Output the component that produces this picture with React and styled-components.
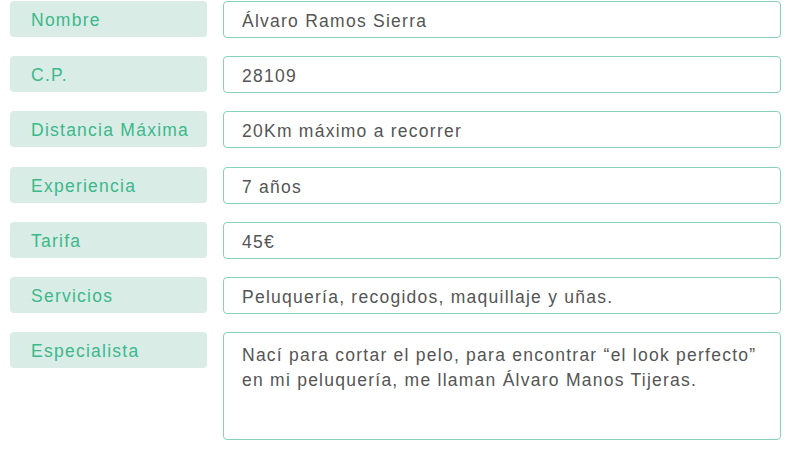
import React from "react";
import styled, { createGlobalStyle } from "styled-components";

const Global = createGlobalStyle`
  html, body { margin: 0; padding: 0; background: #ffffff; }
  body { font-family: "Liberation Sans", Arial, sans-serif; }
  * { box-sizing: border-box; }
`;

const Form = styled.form`
  display: grid;
  grid-template-columns: 197px 558px;
  align-items: start;
  column-gap: 16px;
  row-gap: 18.2px;
  padding: 1px 0 0 10px;
  width: 799px;
`;

const Label = styled.label`
  height: 36px;
  display: flex;
  align-items: ${(p) => (p.$top ? "flex-start" : "center")};
  padding: ${(p) => (p.$top ? "9px 0 0 21px" : "3px 0 0 21px")};
  background: #d9ece6;
  border-radius: 4px;
  color: #3cb88b;
  font-size: 17.5px;
  letter-spacing: 1.25px;
`;

const fieldText = `
  font-family: "Liberation Sans", Arial, sans-serif;
  font-size: 17.5px;
  letter-spacing: 1.25px;
  color: #555555;
  background: #ffffff;
  border: 1px solid #86d4b8;
  border-radius: 4px;
  outline: none;
  width: 100%;
  margin: 0;
`;

const Input = styled.input`
  ${fieldText}
  height: 37px;
  padding: 4px 0 0 18px;
`;

const Area = styled.textarea`
  ${fieldText}
  height: 108px;
  padding: 10px 4px 0 18px;
  line-height: 24.5px;
  resize: none;
  overflow: hidden;
`;

const rows = [
  ["Nombre", "Álvaro Ramos Sierra"],
  ["C.P.", "28109"],
  ["Distancia Máxima", "20Km máximo a recorrer"],
  ["Experiencia", "7 años"],
  ["Tarifa", "45€"],
  ["Servicios", "Peluquería, recogidos, maquillaje y uñas."],
];

export default function App() {
  return (
    <>
      <Global />
      <Form onSubmit={(e) => e.preventDefault()}>
        {rows.map(([label, value]) => (
          <React.Fragment key={label}>
            <Label>{label}</Label>
            <Input readOnly defaultValue={value} />
          </React.Fragment>
        ))}
        <Label $top>Especialista</Label>
        <Area
          readOnly
          defaultValue={
            "Nací para cortar el pelo, para encontrar “el look perfecto”\nen mi peluquería, me llaman Álvaro Manos Tijeras."
          }
        />
      </Form>
    </>
  );
}
